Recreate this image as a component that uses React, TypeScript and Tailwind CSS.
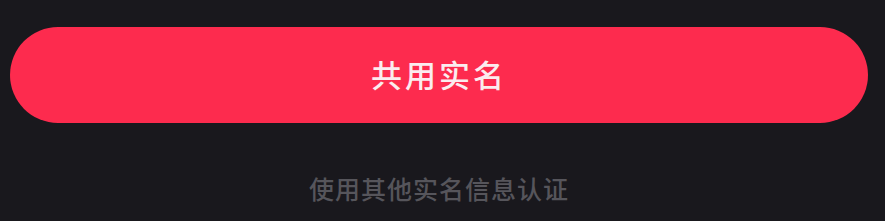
export default function App() {
  return (
    <div
      className="flex h-[221px] w-full flex-col items-center bg-[#19181d] pl-[10px] pr-[17px] pt-[27px]"
      style={{ fontFamily: '"Noto Sans CJK SC", "Noto Sans", sans-serif' }}
    >
      <button className="flex h-[96px] w-full items-center justify-center rounded-full bg-[#fd2b4e] pb-[2px] text-[31px] font-medium tracking-[3px] text-[#fbecef]">
        共用实名
      </button>
      <p className="mt-[48px] text-[25px] font-medium leading-[34px] tracking-[1px] text-[#56555b]">
        使用其他实名信息认证
      </p>
    </div>
  );
}
